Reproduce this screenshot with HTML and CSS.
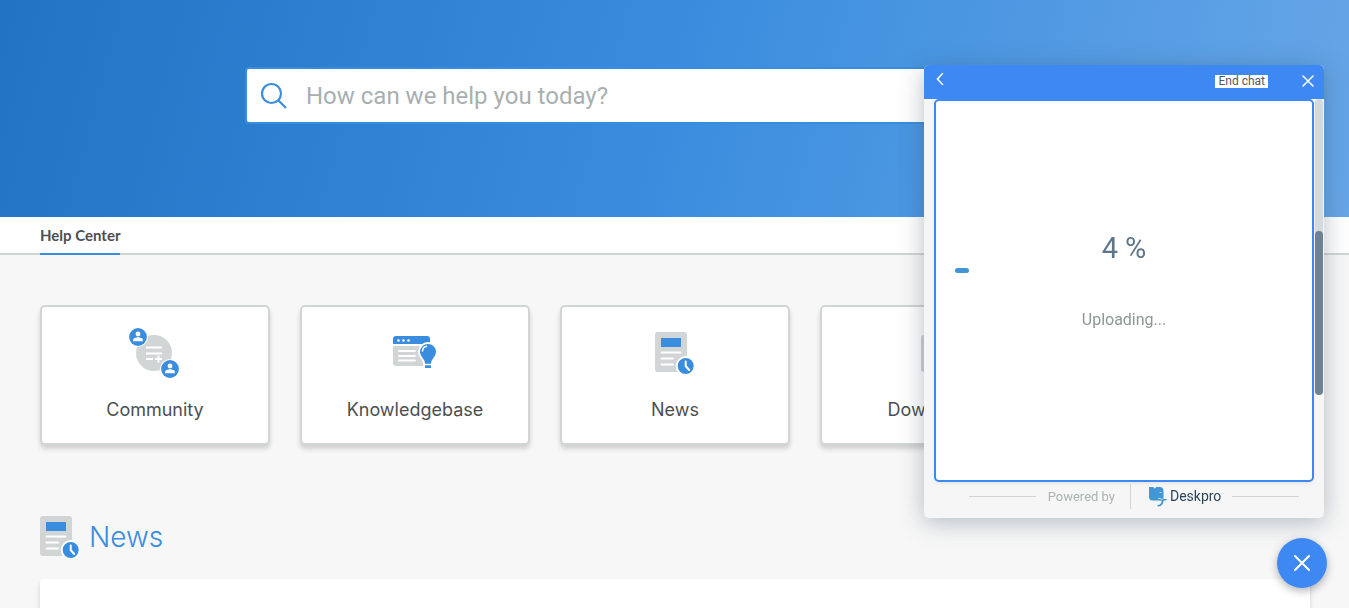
FILE: index.html
```html
<!DOCTYPE html>
<html lang="en">
<head>
<meta charset="utf-8">
<meta name="viewport" content="width=device-width, initial-scale=1">
<title>Help Center</title>
<link rel="stylesheet" href="styles.css">
</head>
<body>
<svg class="defs" aria-hidden="true">
  <symbol id="news-icon" viewBox="0 0 40 44">
    <rect x="0" y="1" width="32" height="40" rx="3" fill="#d1d5d6"/>
    <rect x="6" y="7" width="20" height="9" fill="#3a8dde"/>
    <path d="M6.500 21.500h19M6.500 27.500h11.500M6.500 33.500h11.500" stroke="#fff" stroke-width="2" stroke-linecap="round"/>
    <circle cx="30.700" cy="35" r="9" fill="#3a8dde" stroke="#fff" stroke-width="2"/>
    <path d="M30.700 30.500v4.500l3.500 4" fill="none" stroke="#fff" stroke-width="2" stroke-linecap="round"/>
  </symbol>
  <symbol id="person" viewBox="0 0 18 18">
    <circle cx="9" cy="9" r="9" fill="#fff"/>
    <circle cx="9" cy="9" r="8" fill="#3a8dde"/>
    <circle cx="9" cy="6.300" r="2.200" fill="#fff"/>
    <path d="M4.600 12.800v-1c0-1.600 2.400-2.500 4.400-2.500s4.400.9 4.400 2.500v1z" fill="#fff"/>
  </symbol>
</svg>

<header class="hero">
  <form class="search" role="search">
    <svg class="search-icon" viewBox="0 0 28 28" aria-hidden="true"><circle cx="11.500" cy="11.500" r="9.500"/><path d="M18.500 18.500l7.500 7.500"/></svg>
    <input class="search-input" type="search" aria-label="Search" placeholder="How can we help you today?">
  </form>
</header>

<nav class="nav"><a class="nav-link" href="#">Help Center</a></nav>

<main class="content">
  <section class="cards">
    <a class="card" href="#">
      <svg class="card-icon" viewBox="0 0 52 52" aria-hidden="true">
        <circle cx="25" cy="26" r="18" fill="#d1d5d6"/>
        <path d="M17 20.500h16M17 26.500h16M17 32h7M26 32h7M29.500 28.500v7" stroke="#fff" stroke-width="1.800"/>
        <use href="#person" x="-1" y="0" width="20" height="20"/>
        <use href="#person" x="31" y="32" width="20" height="20"/>
      </svg>
      <span class="card-label">Community</span>
    </a>
    <a class="card" href="#">
      <svg class="card-icon" viewBox="0 0 52 52" aria-hidden="true">
        <path d="M4 14v-2a3 3 0 0 1 3-3h31a3 3 0 0 1 3 3v5H4z" fill="#3a8dde"/>
        <path d="M4 19h37v20H7a3 3 0 0 1-3-3z" fill="#d1d5d6"/>
        <g fill="#fff"><circle cx="9.500" cy="13.500" r="1.300"/><circle cx="14.500" cy="13.500" r="1.300"/><circle cx="19.500" cy="13.500" r="1.300"/></g>
        <path d="M10 24h16M10 29h16M10 33.500h16" stroke="#fff" stroke-width="1.800" stroke-linecap="round"/>
        <path d="M39 16a9 9 0 0 1 9 9c0 5.500-5 6.500-5 11.500V42h-8v-5.500C35 31.500 30 30.500 30 25a9 9 0 0 1 9-9z" fill="#3a8dde" stroke="#fff" stroke-width="2"/>
        <path d="M34 37.500h10" stroke="#fff" stroke-width="1.500"/>
        <path d="M33.500 24c.2-2.500 1.600-4.200 4-4.700" fill="none" stroke="#fff" stroke-width="1.500" stroke-linecap="round"/>
      </svg>
      <span class="card-label">Knowledgebase</span>
    </a>
    <a class="card" href="#">
      <svg class="card-icon" viewBox="0 0 52 52" aria-hidden="true"><use href="#news-icon" x="6" y="4" width="40" height="44"/></svg>
      <span class="card-label">News</span>
    </a>
    <a class="card" href="#">
      <svg class="card-icon" viewBox="0 0 52 52" aria-hidden="true"><rect x="12" y="8" width="32" height="37" rx="3" fill="#d1d5d6"/></svg>
      <span class="card-label">Downloads</span>
    </a>
  </section>

  <h2 class="section-title"><svg class="title-icon" viewBox="0 0 40 44" aria-hidden="true"><use href="#news-icon"/></svg>News</h2>
  <section class="news-panel"></section>
</main>

<aside class="chat" aria-label="Chat">
  <header class="chat-header">
    <button class="icon-button back" type="button" aria-label="Back"><svg width="8" height="14" viewBox="0 0 8 14"><path d="M6.500 1.500L1.500 7l5 5.500"/></svg></button>
    <button class="end-chat" type="button">End chat</button>
    <button class="icon-button" type="button" aria-label="Close"><svg width="12" height="12" viewBox="0 0 12 12"><path d="M1 1l10 10M11 1L1 11"/></svg></button>
  </header>
  <div class="chat-body">
    <div class="upload">
      <p class="upload-percent">4 %</p>
      <div class="upload-track"><div class="upload-bar" style="width:4%"></div></div>
      <p class="upload-status">Uploading...</p>
    </div>
    <div class="scroll-track"><div class="scroll-thumb"></div></div>
  </div>
  <footer class="chat-footer">
    <span class="rule"></span>
    <span class="powered">Powered by</span>
    <span class="brand">
      <svg width="20" height="21" viewBox="0 0 20 21" aria-hidden="true">
        <path d="M1 1h4.500l1 1L8 1h4c2 0 3.500 1.500 3.500 4v8c-1 1.500-2.500 2-5 1.500H4.500C2 14.500 1 13 1 10z" fill="#4196d6"/>
        <path d="M12 13h7c-.5 1.400-2 1.900-3.500 1.600.1 3.500-2 6-5.500 5.800l-.8-1.400c3 .2 4.500-1.500 4.300-4.500z" fill="#4196d6"/>
        <path d="M5.800 1l.9 1.300L7.800 1M12 6.500h1" fill="none" stroke="#f6f6f6" stroke-width=".8"/>
        <path d="M10.500 12.300l4 .9" fill="none" stroke="#f6f6f6" stroke-width=".8"/>
      </svg>Deskpro</span>
    <span class="rule"></span>
  </footer>
</aside>
<button class="launcher" type="button" aria-label="Close chat"><svg width="18" height="18" viewBox="0 0 18 18"><path d="M2 2l14 14M16 2L2 16"/></svg></button>
</body>
</html>
```
FILE: styles.css
```css
* { box-sizing: border-box; }
body {
  display: flex;
  flex-direction: column;
  margin: 0;
  min-height: 100vh;
  background: #f7f7f7;
  color: #4c4f50;
  font-family: Inter, Roboto, sans-serif;
}
.defs { position: absolute; width: 0; height: 0; }
button { border: 0; padding: 0; font-family: inherit; cursor: pointer; }

.hero {
  padding: 67px 40px 93px;
  background: linear-gradient(105deg, #2173c4 0%, #3a8dde 50%, #67a6e7 100%);
}
.search {
  display: flex;
  align-items: center;
  width: 68%;
  max-width: 859px;
  min-width: 300px;
  height: 57px;
  margin: 0 auto;
  padding: 0 13px;
  gap: 18px;
  background: #fff;
  border: 2px solid #3a8dde;
  border-radius: 4px;
}
.search-icon { flex: none; width: 28px; height: 28px; fill: none; stroke: #3a8dde; stroke-width: 2.2; }
.search-input {
  flex: 1;
  min-width: 0;
  padding: 0;
  border: 0;
  outline: 0;
  background: none;
  font: 400 24px Roboto, sans-serif;
}
.search-input::placeholder { color: #a9afb0; opacity: 1; }

.nav {
  display: flex;
  height: 38px;
  padding: 0 40px;
  background: #fff;
  border-bottom: 2px solid #d1d5d5;
}
.nav-link {
  height: 38px;
  color: #4c4f50;
  font: 700 15px/36px Lato, sans-serif;
  text-decoration: none;
  border-bottom: 2px solid #3a8dde;
}

.content { display: flex; flex: 1; flex-direction: column; padding: 50px 39px 0 40px; }
.cards { display: grid; grid-template-columns: repeat(5, 1fr); gap: 30px; }
.card {
  display: flex;
  flex-direction: column;
  align-items: center;
  gap: 19px;
  height: 140px;
  padding-top: 20px;
  color: #4c4f50;
  text-decoration: none;
  background: #fff;
  border: 2px solid #d1d5d5;
  border-radius: 5px;
  box-shadow: 0 4px 5px rgba(0, 0, 0, .16);
}
.card-icon { width: 52px; height: 52px; }
.card-label { font-size: 18px; line-height: 24px; }
.section-title {
  display: flex;
  align-items: center;
  gap: 9px;
  margin: 70px 0 20px;
  color: #3a8dde;
  font-size: 28px;
  font-weight: 300;
  line-height: 44px;
}
.title-icon { width: 40px; height: 44px; }
.news-panel { flex: 1; background: #fff; border-radius: 4px 4px 0 0; box-shadow: 0 4px 5px rgba(0, 0, 0, .16); }

.chat {
  position: fixed;
  right: 25px;
  bottom: 90px;
  width: 400px;
  background: #f6f6f6;
  border-radius: 5px;
  box-shadow: 0 4px 24px rgba(50, 75, 95, .35);
  font-family: Roboto, sans-serif;
}
.chat-header {
  display: flex;
  align-items: center;
  height: 34px;
  padding: 0 10px 2px 12px;
  background: #3d88f3;
  border-radius: 5px 5px 0 0;
}
.icon-button { display: flex; background: none; }
.chat svg path { stroke-linecap: round; }
.icon-button path, .launcher path { fill: none; stroke: #fff; stroke-width: 1.6; }
.back { margin: 0 auto 4px 0; }
.end-chat {
  margin-right: 34px;
  padding: 0 3px;
  background: #fff;
  color: #555a5c;
  font-size: 12px;
  line-height: 13px;
}
.chat-body { display: grid; grid-template-columns: 1fr 8px; gap: 1px; padding: 0 1px 0 10px; }
.upload {
  height: 383px;
  padding: 128px 19px 0;
  background: #fff;
  border: 2px solid #3d88f3;
  border-radius: 5px;
  text-align: center;
  box-shadow: 0 2px 2px rgba(60, 90, 100, .08);
}
.upload-percent { margin: 0; color: #5e768b; font-size: 29px; line-height: 39px; }
.upload-track { height: 5px; }
.upload-bar { height: 5px; background: #4196d6; border-radius: 3px; }
.upload-status { margin: 37px 0 0; color: #8f9696; font-size: 16px; line-height: 20px; }
.scroll-track { display: flex; align-items: flex-end; height: 296px; background: #d2d9df; border-radius: 4px; }
.scroll-thumb { width: 8px; height: 164px; background: #6d8293; border-radius: 4px; }
.chat-footer { display: flex; align-items: center; height: 36px; padding: 0 25px 8px 45px; }
.rule { flex: 1; height: 1px; background: #d1d5d5; }
.powered {
  margin-left: 12px;
  padding-right: 15px;
  border-right: 1px solid #d1d5d5;
  color: #acb3b2;
  font-size: 13px;
  line-height: 25px;
}
.brand { display: flex; align-items: center; gap: 2px; margin: 0 11px 0 17px; color: #2d455b; font-size: 14px; }

.launcher {
  position: fixed;
  right: 22px;
  bottom: 20px;
  display: flex;
  align-items: center;
  justify-content: center;
  width: 50px;
  height: 50px;
  background: #3d88f3;
  border-radius: 50%;
  box-shadow: 0 3px 8px rgba(0, 0, 0, .3);
}
.launcher path { stroke-width: 2; stroke-linecap: round; }
```
